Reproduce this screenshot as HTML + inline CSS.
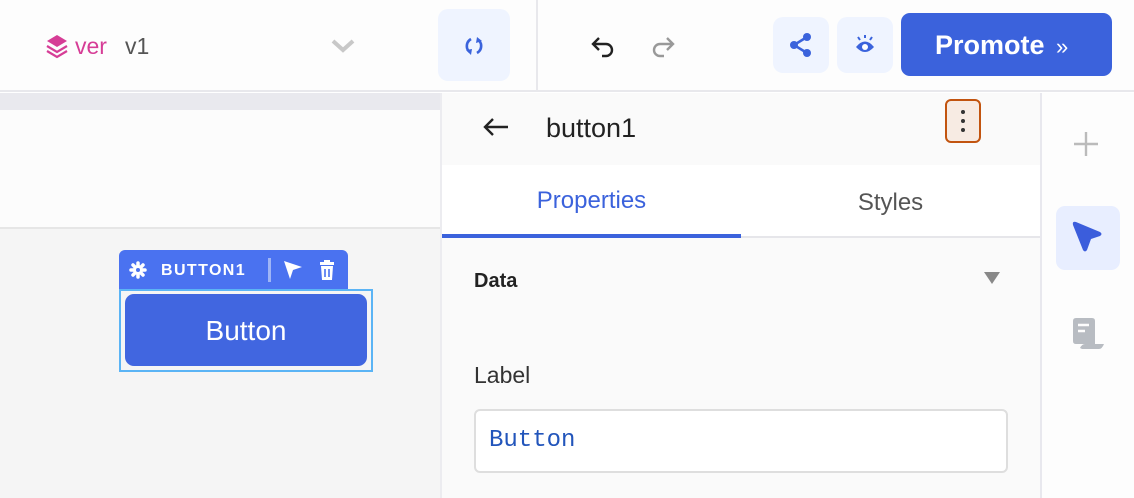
<!DOCTYPE html>
<html><head><style>
*{box-sizing:border-box;margin:0;padding:0}
body{width:1134px;height:498px;overflow:hidden;background:#fff;font-family:"Liberation Sans",sans-serif;position:relative}
.a{position:absolute}
</style></head><body>
<!-- top bar -->
<div class="a" style="left:0;top:0;width:1134px;height:92px;background:#fdfdfd;border-bottom:2px solid #e8e8ec"></div>
<svg class="a" style="left:44px;top:33px" width="26" height="26" viewBox="0 0 26 26"><path d="M13 2 L23 8 L13 14 L3 8Z" fill="#d63d96"/><path d="M3 13 L13 19 L23 13" stroke="#d63d96" stroke-width="2.2" fill="none"/><path d="M3 18 L13 24 L23 18" stroke="#d63d96" stroke-width="2.2" fill="none"/></svg>
<div class="a" style="left:75px;top:33px;font-size:23px;color:#d63d96">ver</div>
<div class="a" style="left:125px;top:33px;font-size:23px;color:#555">v1</div>
<svg class="a" style="left:330px;top:38px" width="26" height="16"><path d="M3 3 L13 12 L23 3" stroke="#c8c8c8" stroke-width="4" fill="none"/></svg>
<div class="a" style="left:438px;top:9px;width:72px;height:72px;border-radius:10px;background:#eff4ff"></div>
<svg class="a" style="left:462px;top:34px" width="24" height="24" viewBox="0 0 24 24"><path d="M9 5 Q4 8 5 14 Q6 17 8 18" stroke="#3b63dc" stroke-width="2.6" fill="none"/><path d="M4 16 L9 21 L10 15Z" fill="#3b63dc"/><path d="M15 19 Q20 16 19 10 Q18 7 16 6" stroke="#3b63dc" stroke-width="2.6" fill="none"/><path d="M14 9 L15 3 L20 7Z" fill="#3b63dc"/></svg>
<div class="a" style="left:536px;top:0;width:2px;height:92px;background:#e8e8ec"></div>
<svg class="a" style="left:590px;top:34px" width="26" height="24"><path d="M9 4 L3 10 L9 16 M3 10 H16 A6 6 0 0 1 16 22 H12" stroke="#222" stroke-width="2.4" fill="none"/></svg>
<svg class="a" style="left:650px;top:34px" width="26" height="24"><path d="M17 4 L23 10 L17 16 M23 10 H10 A6 6 0 0 0 10 22 H14" stroke="#999" stroke-width="2.4" fill="none"/></svg>
<div class="a" style="left:773px;top:17px;width:56px;height:56px;border-radius:10px;background:#eff4ff"></div>
<svg class="a" style="left:788px;top:32px" width="26" height="26"><circle cx="6" cy="13" r="4" fill="#3b63dc"/><circle cx="19" cy="5" r="4" fill="#3b63dc"/><circle cx="19" cy="21" r="4" fill="#3b63dc"/><path d="M6 13 L19 5 M6 13 L19 21" stroke="#3b63dc" stroke-width="2.5"/></svg>
<div class="a" style="left:837px;top:17px;width:56px;height:56px;border-radius:10px;background:#eff4ff"></div>
<svg class="a" style="left:852px;top:33px" width="26" height="24"><path d="M4 14 Q13 3 22 14 Q13 24 4 14Z" fill="#3b63dc"/><circle cx="13" cy="14" r="3" fill="#fff"/><path d="M13 2 V5 M6 4 L8 7 M20 4 L18 7" stroke="#3b63dc" stroke-width="2"/></svg>
<div class="a" style="left:901px;top:13px;width:211px;height:63px;border-radius:9px;background:#3b62dc;color:#fff;font-size:27px;font-weight:bold;line-height:65px;padding-left:34px">Promote <span style="font-weight:normal;font-size:22px;margin-left:4px">»</span></div>
<!-- canvas -->
<div class="a" style="left:0;top:93px;width:440px;height:405px;background:#f5f5f5"></div>
<div class="a" style="left:0;top:93px;width:440px;height:17px;background:#e9e9ee"></div>
<div class="a" style="left:0;top:110px;width:440px;height:119px;background:#fcfcfc;border-bottom:2px solid #e6e6e6"></div>
<div class="a" style="left:440px;top:93px;width:2px;height:405px;background:#ececf0"></div>
<div class="a" style="left:119px;top:250px;width:229px;height:40px;border-radius:6px 6px 0 0;background:#4a72f0"></div>
<svg class="a" style="left:129px;top:261px" width="18" height="18" viewBox="0 0 18 18"><g stroke="#fff" stroke-width="3.5" stroke-linecap="round"><path d="M9 2 V16 M2 9 H16 M4 4 L14 14 M14 4 L4 14"/></g><circle cx="9" cy="9" r="5" fill="#fff"/><circle cx="9" cy="9" r="2" fill="#4a72f0"/></svg>
<div class="a" style="left:161px;top:262px;font-size:16px;font-weight:bold;color:#fff;letter-spacing:1.4px">BUTTON1</div>
<div class="a" style="left:268px;top:258px;width:3px;height:24px;background:#9fb5f6"></div>
<svg class="a" style="left:282px;top:259px" width="22" height="22"><path d="M2 2 L20 8 L11 11 L8 20Z" fill="#fff"/></svg>
<svg class="a" style="left:318px;top:259px" width="18" height="22"><rect x="2" y="3" width="14" height="3" fill="#fff"/><rect x="6" y="1" width="6" height="3" fill="#fff"/><path d="M3 7 H15 L14 21 H4Z" fill="#fff"/><path d="M7 10 V18 M11 10 V18" stroke="#4a72f0" stroke-width="1.6"/></svg>
<div class="a" style="left:119px;top:289px;width:254px;height:83px;border:2px solid #5bb4f5"></div>
<div class="a" style="left:125px;top:294px;width:242px;height:72px;border-radius:9px;background:#4166e0;color:#fff;font-size:28px;text-align:center;line-height:74px">Button</div>
<!-- right panel -->
<div class="a" style="left:442px;top:93px;width:598px;height:405px;background:#fafafa"></div>
<svg class="a" style="left:482px;top:116px" width="28" height="22"><path d="M11 3 L3 11 L11 19 M3 11 H26" stroke="#222" stroke-width="2.4" fill="none"/></svg>
<div class="a" style="left:546px;top:113px;font-size:27px;color:#222">button1</div>
<div class="a" style="left:945px;top:99px;width:36px;height:44px;border:2px solid #c2540f;border-radius:6px;background:#f7ebe3"></div>
<div class="a" style="left:961px;top:110px;width:4px;height:4px;border-radius:2px;background:#333;box-shadow:0 9px 0 #333,0 18px 0 #333"></div>
<div class="a" style="left:442px;top:165px;width:598px;height:73px;background:#fff;border-bottom:2px solid #e6e6ea"></div>
<div class="a" style="left:442px;top:234px;width:299px;height:4px;background:#3b62dc"></div>
<div class="a" style="left:442px;top:187px;width:299px;text-align:center;font-size:24px;color:#3b62dc">Properties</div>
<div class="a" style="left:741px;top:189px;width:299px;text-align:center;font-size:24px;color:#555">Styles</div>
<div class="a" style="left:474px;top:270px;font-size:20px;font-weight:bold;color:#222">Data</div>
<svg class="a" style="left:983px;top:271px" width="18" height="14"><path d="M1 1 H17 L9 13Z" fill="#888"/></svg>
<div class="a" style="left:474px;top:362px;font-size:23px;color:#333">Label</div>
<div class="a" style="left:474px;top:409px;width:534px;height:64px;border:2px solid #dedede;border-radius:6px;background:#fff;padding-left:13px;line-height:60px;font-family:'Liberation Mono',monospace;font-size:24px;color:#2255bb">Button</div>
<!-- sidebar -->
<div class="a" style="left:1040px;top:93px;width:2px;height:405px;background:#e8e8ee"></div>
<div class="a" style="left:1042px;top:93px;width:92px;height:405px;background:#fdfdfd"></div>
<svg class="a" style="left:1072px;top:130px" width="28" height="28"><path d="M14 2 V26 M2 14 H26" stroke="#bbb" stroke-width="2.4"/></svg>
<div class="a" style="left:1056px;top:206px;width:64px;height:64px;border-radius:9px;background:#e8eeff"></div>
<svg class="a" style="left:1070px;top:220px" width="36" height="36"><path d="M3 5 Q2 1 6 2 L30 12 Q33 14 30 16 L21 19 L17 30 Q15 33 13 30Z" fill="#3b5ddc"/></svg>
<svg class="a" style="left:1072px;top:317px" width="36" height="36"><path d="M1 4 Q1 1 4 1 H20 Q23 1 23 4 V27 H4 Q1 27 1 24Z" fill="#b8bcc2"/><path d="M6 8 H17 M6 14 H13" stroke="#fdfdfd" stroke-width="2.5"/><path d="M8 31 Q10 27 13 27 H32 Q30 32 27 32 H10Z" fill="#b8bcc2"/></svg>
</body></html>
